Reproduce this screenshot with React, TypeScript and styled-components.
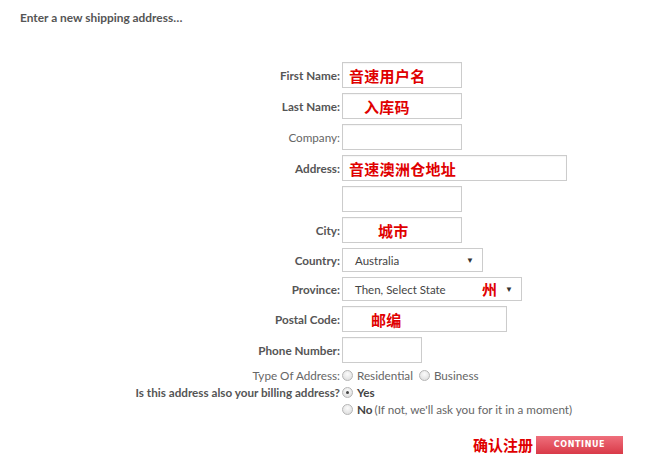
import React from "react"
import styled, { createGlobalStyle } from "styled-components"

const GlobalStyle = createGlobalStyle`
  body {
    margin: 0;
    background: #fff;
    font-family: Lato, "Liberation Sans", sans-serif;
    color: #555;
  }
`

const Page = styled.div`
  width: 669px;
  height: 467px;
  box-sizing: border-box;
  padding: 11px 0 0 20px;
  position: relative;
`

const Heading = styled.div`
  font-size: 11.9px;
  font-weight: bold;
  color: #555;
  line-height: 14px;
`

const Form = styled.div`
  display: grid;
  grid-template-columns: 320px 1fr;
  column-gap: 2px;
  row-gap: 5px;
  margin-top: 37px;
  align-items: center;
`

const Label = styled.div<{ $plain?: boolean }>`
  text-align: right;
  font-size: 11.7px;
  font-weight: ${(p) => (p.$plain ? "normal" : "bold")};
  color: ${(p) => (p.$plain ? "#666" : "#555")};
  white-space: nowrap;
`

const Field = styled.div`
  display: flex;
  align-items: center;
  position: relative;
`

const Box = styled.div<{ $w: number; $indent?: number }>`
  width: ${(p) => p.$w}px;
  height: 26px;
  box-sizing: border-box;
  border: 1px solid #ccc;
  box-shadow: inset 0 1px 1px rgba(0, 0, 0, 0.04);
  background: #fff;
  padding-left: ${(p) => p.$indent ?? 6}px;
  display: flex;
  align-items: center;
  font-family: "Noto Sans CJK SC", sans-serif;
  font-size: 15px;
  font-weight: bold;
  color: #e00000;
  letter-spacing: 0.3px;
`

const Select = styled.div<{ $w: number }>`
  width: ${(p) => p.$w}px;
  height: 24px;
  box-sizing: border-box;
  border: 1px solid #ccc;
  background: #fff;
  padding: 0 8px 0 12px;
  display: flex;
  align-items: center;
  justify-content: space-between;
  font-size: 11.5px;
  color: #444;
`

const Arrow = styled.span`
  font-size: 8px;
  color: #333;
`

const StateMark = styled.span`
  position: absolute;
  left: 140px;
  top: 1px;
  font-family: "Noto Sans CJK SC", sans-serif;
  font-size: 15px;
  font-weight: bold;
  color: #e00000;
`

const RadioRows = styled.div`
  display: grid;
  grid-template-columns: 320px 1fr;
  column-gap: 2px;
  row-gap: 3px;
  margin-top: 5px;
  align-items: center;
`

const Options = styled.div`
  display: flex;
  align-items: center;
  gap: 4px;
  font-size: 11.7px;
  color: #666;
  line-height: 14px;
`

const Radio = styled.span<{ $checked?: boolean }>`
  width: 9px;
  height: 9px;
  border-radius: 50%;
  border: 1px solid #b5b5b5;
  background: radial-gradient(circle at 50% 35%, #fbfbfb, #d8d8d8);
  display: inline-flex;
  align-items: center;
  justify-content: center;
  flex: none;

  &::after {
    content: "";
    width: 3px;
    height: 3px;
    border-radius: 50%;
    background: ${(p) => (p.$checked ? "#444" : "transparent")};
  }
`

const Choice = styled.span<{ $strong?: boolean }>`
  font-weight: ${(p) => (p.$strong ? "bold" : "normal")};
  color: ${(p) => (p.$strong ? "#444" : "#666")};
  margin-right: 2px;
`

const Footer = styled.div`
  display: flex;
  justify-content: flex-end;
  align-items: center;
  gap: 3px;
  margin-top: 18px;
  padding-right: 46px;
`

const Confirm = styled.span`
  font-family: "Noto Sans CJK SC", sans-serif;
  font-size: 15px;
  font-weight: bold;
  color: #e00000;
`

const ContinueButton = styled.button`
  width: 87px;
  height: 18px;
  border: 0;
  padding: 0;
  background: linear-gradient(#ef6f7c, #d93a48);
  color: #fff;
  font-family: "DejaVu Sans", sans-serif;
  font-size: 8px;
  font-weight: bold;
  letter-spacing: 0.6px;
  cursor: pointer;
`

export default function App() {
  return (
    <Page>
      <GlobalStyle />
      <Heading>Enter a new shipping address…</Heading>
      <Form>
        <Label>First Name:</Label>
        <Field>
          <Box $w={120}>音速用户名</Box>
        </Field>
        <Label>Last Name:</Label>
        <Field>
          <Box $w={120} $indent={21}>入库码</Box>
        </Field>
        <Label $plain>Company:</Label>
        <Field>
          <Box $w={120} />
        </Field>
        <Label>Address:</Label>
        <Field>
          <Box $w={225}>音速澳洲仓地址</Box>
        </Field>
        <span />
        <Field>
          <Box $w={120} />
        </Field>
        <Label>City:</Label>
        <Field>
          <Box $w={120} $indent={35}>城市</Box>
        </Field>
        <Label>Country:</Label>
        <Field>
          <Select $w={141}>
            Australia <Arrow>▼</Arrow>
          </Select>
        </Field>
        <Label>Province:</Label>
        <Field>
          <Select $w={180}>
            Then, Select State <Arrow>▼</Arrow>
          </Select>
          <StateMark>州</StateMark>
        </Field>
        <Label>Postal Code:</Label>
        <Field>
          <Box $w={165} $indent={28}>邮编</Box>
        </Field>
        <Label>Phone Number:</Label>
        <Field>
          <Box $w={80} />
        </Field>
      </Form>
      <RadioRows>
        <Label $plain>Type Of Address:</Label>
        <Options>
          <Radio />
          <Choice>Residential</Choice>
          <Radio />
          <Choice>Business</Choice>
        </Options>
        <Label>Is this address also your billing address?</Label>
        <Options>
          <Radio $checked />
          <Choice $strong>Yes</Choice>
        </Options>
        <span />
        <Options>
          <Radio />
          <span>
            <Choice $strong>No</Choice>(If not, we'll ask you for it in a moment)
          </span>
        </Options>
      </RadioRows>
      <Footer>
        <Confirm>确认注册</Confirm>
        <ContinueButton>CONTINUE</ContinueButton>
      </Footer>
    </Page>
  )
}
